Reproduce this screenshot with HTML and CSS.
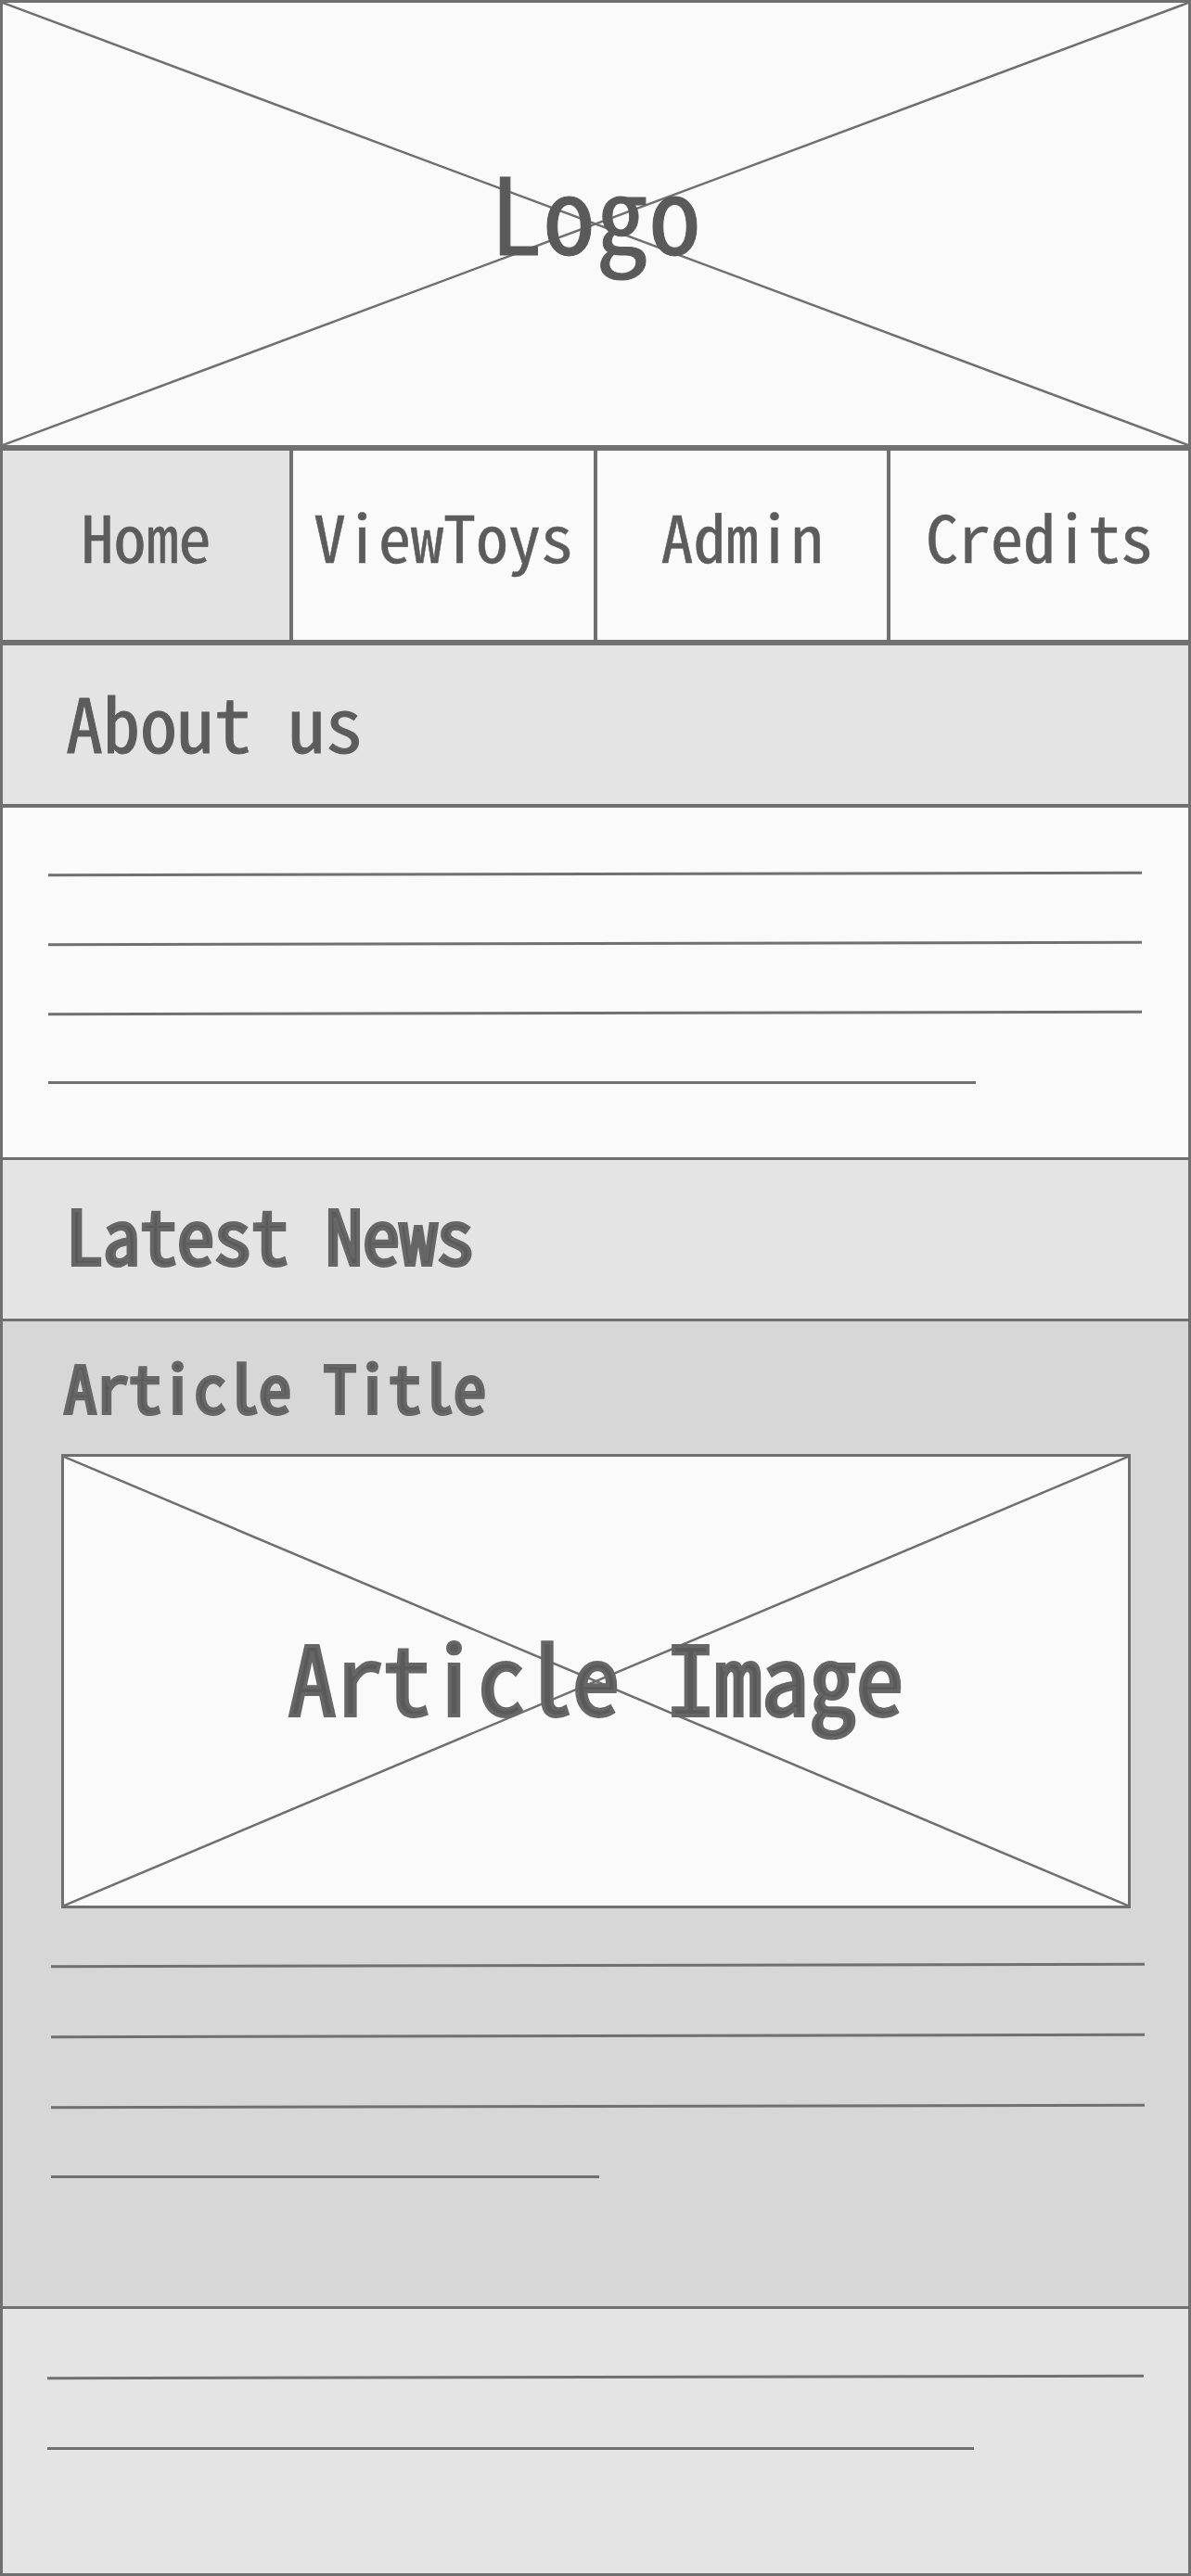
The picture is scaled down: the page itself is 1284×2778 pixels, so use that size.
FILE: index.html
```html
<!DOCTYPE html>
<html lang="en">
<head>
<meta charset="utf-8">
<title>Toy Shop Wireframe</title>
<link rel="stylesheet" href="styles.css">
</head>
<body>
<div class="page">
  <header class="logo-box">
    <svg class="cross" viewBox="0 0 100 100" preserveAspectRatio="none" aria-hidden="true">
      <line x1="0" y1="0" x2="100" y2="100" vector-effect="non-scaling-stroke"/>
      <line x1="100" y1="0" x2="0" y2="100" vector-effect="non-scaling-stroke"/>
    </svg>
    <span class="logo-text">Logo</span>
  </header>
  <nav class="nav">
    <a class="nav-item active">Home</a>
    <a class="nav-item">ViewToys</a>
    <a class="nav-item">Admin</a>
    <a class="nav-item">Credits</a>
  </nav>
  <section class="about-head">
    <h2 class="about-title">About us</h2>
  </section>
  <section class="about-body">
    <div class="line tilt w-full"></div>
    <div class="line tilt w-full"></div>
    <div class="line tilt w-full"></div>
    <div class="line w-about-last"></div>
  </section>
  <section class="news-head">
    <h2 class="news-title">Latest News</h2>
  </section>
  <article class="article">
    <h3 class="article-title">Article Title</h3>
    <div class="article-image">
      <svg class="cross" viewBox="0 0 100 100" preserveAspectRatio="none" aria-hidden="true">
        <line x1="0" y1="0" x2="100" y2="100" vector-effect="non-scaling-stroke"/>
        <line x1="100" y1="0" x2="0" y2="100" vector-effect="non-scaling-stroke"/>
      </svg>
      <span class="image-text">Article Image</span>
    </div>
    <div class="article-lines">
      <div class="line tilt w-full"></div>
      <div class="line tilt w-full"></div>
      <div class="line tilt w-full"></div>
      <div class="line w-article-last"></div>
    </div>
  </article>
  <footer class="footer">
    <div class="line tilt w-footer"></div>
    <div class="line w-footer-last"></div>
  </footer>
</div>
</body>
</html>
```
FILE: styles.css
```css
* { box-sizing: border-box; margin: 0; padding: 0; }

html, body {
  background: #fafafa;
}

body {
  margin: 0;
  font-family: "Noto Sans Mono CJK JP", "DejaVu Sans Mono", "Liberation Mono", monospace;
  color: #5c5c5c;
}

.page {
  width: 1284px;
  height: 2778px;
  border: 3px solid #707070;
  display: flex;
  flex-direction: column;
}

/* header / logo */
.logo-box {
  position: relative;
  height: 483px;
  border-bottom: 6px solid #707070;
  background: #fafafa;
  display: flex;
  justify-content: center;
  align-items: flex-start;
  padding-top: 166px;
}

.cross {
  position: absolute;
  inset: 0;
  width: 100%;
  height: 100%;
}

.cross line {
  stroke: #6f6f6f;
  stroke-width: 2.5;
}

.logo-text {
  position: relative;
  font-size: 114px;
  line-height: 1;
  font-weight: 500;
  color: #5a5a5a;
  -webkit-text-stroke: 1px #5a5a5a;
}

/* nav */
.nav {
  height: 210px;
  border-bottom: 6px solid #707070;
  background: #707070;
  display: grid;
  grid-template-columns: 309px 324px 312px 321px;
  column-gap: 4px;
}

.nav-item {
  background: #fafafa;
  display: flex;
  justify-content: center;
  align-items: flex-start;
  padding-top: 56px;
  font-size: 70px;
  line-height: 1;
  color: #5c5c5c;
  text-decoration: none;
  -webkit-text-stroke: 0.5px #5c5c5c;
}

.nav-item.active {
  background: #e3e3e3;
}

/* about */
.about-head {
  height: 175px;
  border-bottom: 4px solid #707070;
  background: #e4e4e4;
  padding: 41px 0 0 68px;
}

.about-title {
  font-size: 80px;
  line-height: 1;
  font-weight: 400;
  color: #5c5c5c;
  -webkit-text-stroke: 1px #5c5c5c;
}

.about-body {
  height: 380px;
  border-bottom: 3px solid #707070;
  background: #fafafa;
  padding: 70px 0 0 49px;
  display: flex;
  flex-direction: column;
  gap: 72px;
}

.line {
  height: 3px;
  background: #707070;
  flex: none;
}

.tilt {
  transform: rotate(-0.12deg);
}

.w-full { width: 1179px; }
.w-about-last { width: 1000px; }
.w-article-last { width: 591px; }
.w-footer { width: 1182px; }
.w-footer-last { width: 999px; }

/* latest news */
.news-head {
  height: 174px;
  border-bottom: 3px solid #707070;
  background: #e4e4e4;
  padding: 38px 0 0 68px;
}

.news-title,
.article-title,
.image-text {
  font-weight: 500;
  line-height: 1;
  color: #5a5a5a;
  -webkit-text-stroke: 4px #666666;
}

.news-title {
  font-size: 80px;
}

/* article */
.article {
  height: 1065px;
  border-bottom: 3px solid #707070;
  background: #d7d7d7;
  padding: 34px 0 0 0;
  display: flex;
  flex-direction: column;
}

.article-title {
  font-size: 70px;
  padding-left: 66px;
}

.article-image {
  position: relative;
  margin: 39px 0 0 63px;
  width: 1153px;
  height: 490px;
  border: 3px solid #707070;
  background: #fafafa;
  display: flex;
  justify-content: center;
  align-items: flex-start;
  padding-top: 184px;
}

.image-text {
  position: relative;
  font-size: 102px;
}

.article-lines {
  margin: 60px 0 0 52px;
  display: flex;
  flex-direction: column;
  gap: 73px;
}

/* footer */
.footer {
  flex: 1;
  background: #e4e4e4;
  padding: 72px 0 0 48px;
  display: flex;
  flex-direction: column;
  gap: 74px;
}
```
